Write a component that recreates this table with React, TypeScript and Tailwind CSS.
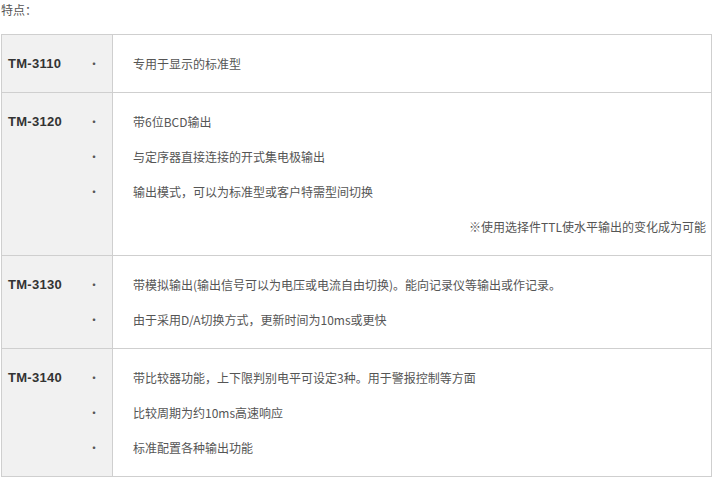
import React from 'react';

interface Spec {
  model: string;
  items: string[];
  note?: string;
}

const SPECS: Spec[] = [
  { model: 'TM-3110', items: ['专用于显示的标准型'] },
  {
    model: 'TM-3120',
    items: ['带6位BCD输出', '与定序器直接连接的开式集电极输出', '输出模式，可以为标准型或客户特需型间切换'],
    note: '※使用选择件TTL使水平输出的变化成为可能',
  },
  {
    model: 'TM-3130',
    items: ['带模拟输出(输出信号可以为电压或电流自由切换)。能向记录仪等输出或作记录。', '由于采用D/A切换方式，更新时间为10ms或更快'],
  },
  {
    model: 'TM-3140',
    items: ['带比较器功能，上下限判别电平可设定3种。用于警报控制等方面', '比较周期为约10ms高速响应', '标准配置各种输出功能'],
  },
];

const font = { fontFamily: '"Microsoft YaHei", "Noto Sans CJK SC", sans-serif' };

function SpecRow({ spec, first }: { spec: Spec; first: boolean }) {
  return (
    <div className={`flex ${first ? '' : 'border-t border-[#cfcfcf]'}`}>
      {/* model column */}
      <div className="w-[111px] shrink-0 bg-[#f1f1f1] border-r border-[#cfcfcf] py-[11px]">
        {spec.items.map((_, i) => (
          <div key={i} className="h-[35px] flex items-center pl-[6px] pr-[12px]">
            <span
              className="flex-1 text-[13px] font-bold text-[#333] tracking-[0.3px]"
              style={{ fontFamily: '"Liberation Sans", Arial, sans-serif' }}
            >
              {i === 0 ? spec.model : ''}
            </span>
            <span className="text-[12px] text-[#555]">·</span>
          </div>
        ))}
      </div>
      {/* detail column */}
      <div className="flex-1 py-[11px] text-[12px] text-[#555]">
        {spec.items.map((t, i) => (
          <div key={i} className="h-[35px] flex items-center pl-[20px] whitespace-nowrap">
            {t}
          </div>
        ))}
        {spec.note && (
          <div className="h-[35px] flex items-center justify-end pr-[5px] whitespace-nowrap">{spec.note}</div>
        )}
      </div>
    </div>
  );
}

export default function App() {
  return (
    <div className="w-[719px] h-[486px] bg-white overflow-hidden" style={font}>
      <div className="h-[20px] flex items-center pl-px text-[12px] text-[#555]">特点：</div>
      <div className="mt-[14px] ml-px w-[711px] border border-[#cfcfcf]">
        {SPECS.map((s, i) => (
          <SpecRow key={s.model} spec={s} first={i === 0} />
        ))}
      </div>
    </div>
  );
}
